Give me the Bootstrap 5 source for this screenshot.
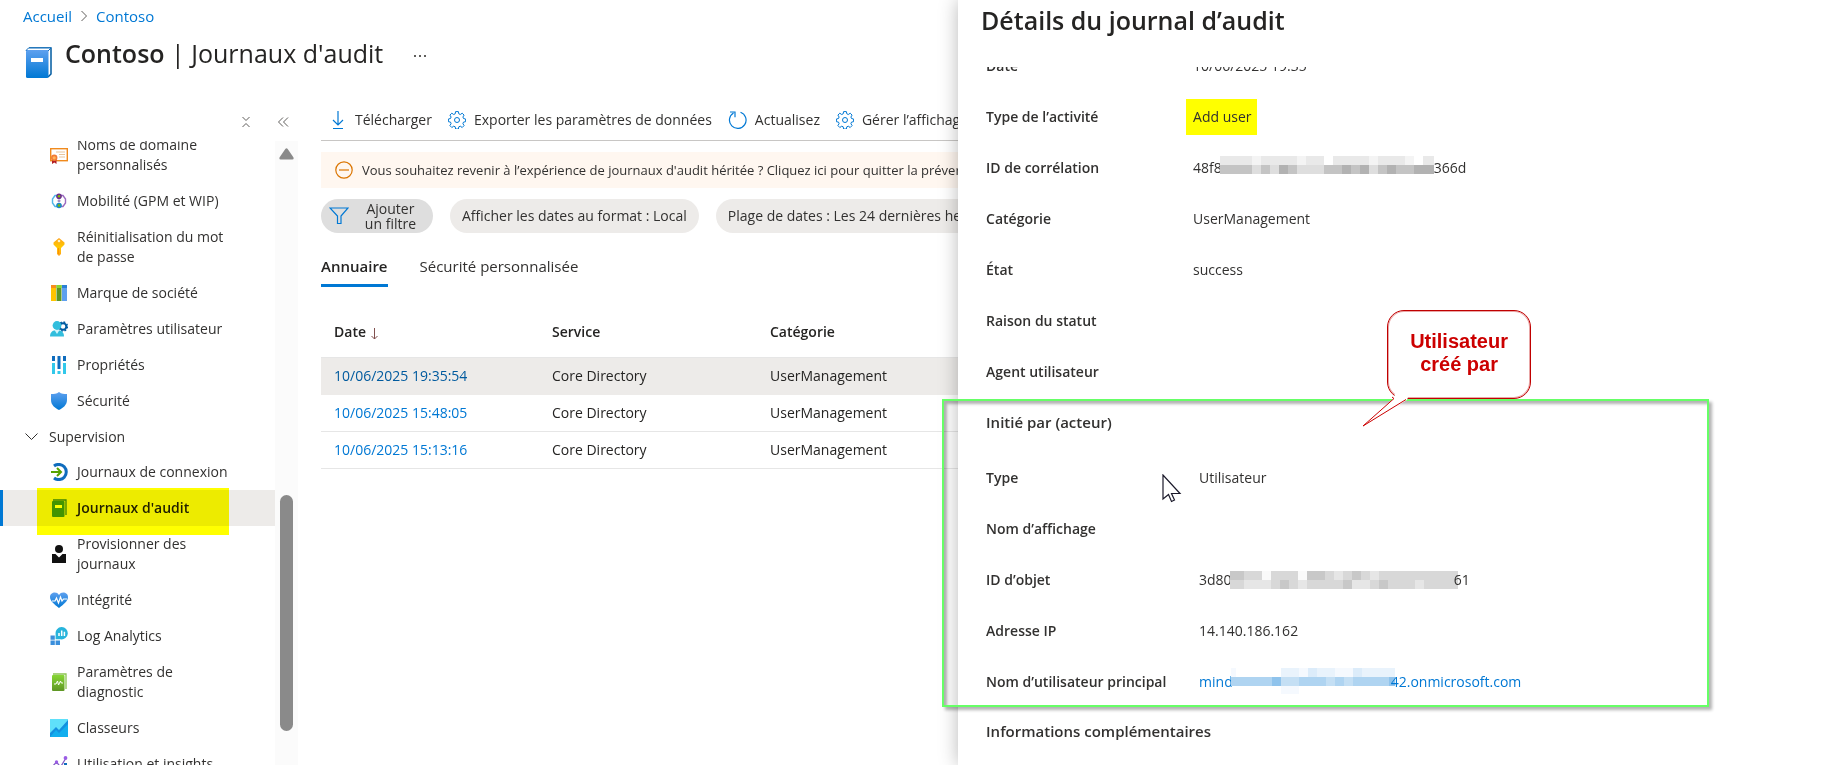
<!DOCTYPE html>
<html lang="fr">
<head>
<meta charset="utf-8">
<meta name="viewport" content="width=device-width, initial-scale=1">
<title>Contoso | Journaux d'audit</title>
<link href="https://cdn.jsdelivr.net/npm/bootstrap@5.3.0/dist/css/bootstrap.min.css" rel="stylesheet">
<style>
  :root { --az-blue: #0078d4; --az-text: #323130; --az-line: #e6e6e6; }
  body { font-family: "Open Sans", "Noto Sans", sans-serif; font-size: 14px; line-height: 20px; color: var(--az-text); background: #fff; }
  a { color: var(--az-blue); text-decoration: none; }
  .shell { display: grid; grid-template-columns: 11fr 10fr; height: 100vh; overflow: hidden; }
  .shell > * { min-width: 0; min-height: 0; }
  .fit { min-height: 0; }
  button { color: inherit; }
  .plain-btn { border: 0; background: none; padding: 0; line-height: 1; }

  .crumbs { height: 32px; padding-left: 23px; gap: 8px; font-size: 15px; }
  .page-head { height: 68px; padding-left: 24px; }
  .page-head h1 { font-size: 25px; line-height: 32px; margin: 5px 0 0 11px; color: #252423; font-weight: 400; }
  .page-head h1 b { font-weight: 600; }
  .page-head .book { margin-top: 14px; }

  .side { width: 298px; }
  .side-tools { height: 41px; padding-right: 7px; gap: 24px; }
  .side-list { width: 275px; overflow: hidden; }
  .side-list ul { margin-top: -14px; }
  .side-link { display: flex; align-items: center; gap: 9px; color: inherit; padding: 8px 40px 8px 50px; }
  .side-link svg { flex: none; width: 18px; height: 18px; }
  .side-group { height: 35px; padding-left: 24px; gap: 10px; border: 0; background: none; }
  .side-link.current { position: relative; background: #edebe9; border-left: 3px solid var(--az-blue); padding-left: 47px; color: #201f1e; font-weight: 600; }
  .marker { position: absolute; left: 34px; right: 46px; top: -2px; bottom: -9px; background: #ff0; mix-blend-mode: multiply; z-index: 1; }
  .rail { width: 23px; background: #fbfbfb; padding-top: 7px; }
  .thumb { width: 13px; height: 236px; border-radius: 7px; background: #8a8a8a; margin-bottom: 34px; }

  .work { padding-left: 23px; white-space: nowrap; min-width: 0; }
  .tools { height: 41px; border-bottom: 1px solid #c8c6c4; padding-left: 8px; gap: 16px; }
  .tools button { display: flex; align-items: center; gap: 8px; line-height: 20px; flex: none; }
  .notice { height: 36px; background: #fff7f0; margin-top: 11px; padding-left: 14px; gap: 9px; font-size: 13px; }
  .pills { margin-top: 11px; gap: 17px; }
  .pill { height: 34px; border: 0; border-radius: 17px; background: #edebe9; padding: 0 12px; flex: none; }
  .pill.add { width: 112px; background: #dedede; line-height: 15px; padding: 0 17px 0 8px; }
  .tabs { margin-top: 15px; gap: 32px; font-size: 15px; }
  .tabs button { height: 39px; border-bottom: 3px solid transparent; }
  .tabs button[aria-selected=true] { border-color: var(--az-blue); font-weight: 600; color: #252423; }
  .logs { margin-top: 21px; width: 100%; table-layout: fixed; }
  .logs th { height: 49px; font-weight: 600; padding: 0 0 0 13px; border-bottom: 1px solid var(--az-line); color: #252423; }
  .logs td { height: 37px; padding: 0 0 0 13px; border-bottom: 1px solid var(--az-line); color: #252423; }
  .logs .fixed-w { width: 218px; }
  .logs .picked td { background: #edebe9; border-color: #edebe9; }
  .logs .picked a { color: #005a9e; }

  .details { position: relative; background: #fff; box-shadow: 0 0 18px rgba(0,0,0,.28); padding-left: 23px; }
  .details h2 { height: 67px; margin: 0; padding-top: 4px; font-size: 25px; line-height: 32px; font-weight: 600; color: #252423; }
  .detail-body { padding-left: 5px; clip-path: inset(0 0 0 -60px); }
  .detail-body dl { margin: 0; }
  .detail-body .detail-first { margin-top: -27px; }
  .line { display: flex; align-items: center; height: 51px; }
  .line dt { width: 207px; font-weight: 600; }
  .line dd { margin: 0; display: flex; align-items: center; }
  .actor { position: relative; }
  .actor dt { width: 213px; }
  .actor h3, .extra h3 { font-size: 15px; line-height: 20px; font-weight: 600; margin: 0; }
  .actor h3 { padding: 15px 0 20px; }
  .frame { position: absolute; left: -44px; top: 2px; right: 120px; height: 308px; border: 2px solid #6f6; box-shadow: 3px 3px 3px rgba(0,0,0,.3), inset 3px 3px 3px rgba(0,0,0,.3); pointer-events: none; }
  .line .hl { background: #ff0; padding: 8px 5px 8px 7px; margin-left: -7px; }
  .mosaic { shape-rendering: crispEdges; flex: none; margin: 0 -4px 0 -2px; }
  .bubble { position: absolute; left: 401px; top: -87px; width: 144px; height: 89px; border: 1px solid #c00000; box-shadow: inset 0 0 0 1px rgba(192,0,0,.35); border-radius: 17px; background: #fff; color: #c00; font: bold 20px/23px "Liberation Sans", Arial, sans-serif; padding-top: 19px; text-align: center; }
  .bubble svg { position: absolute; left: -27px; top: 83px; }
  .pointer { position: absolute; left: 176px; top: 77px; }
  .extra h3 { padding-top: 14px; }
</style>
</head>
<body>
<svg width="0" height="0" class="position-absolute" aria-hidden="true">
  <defs>
    <linearGradient id="gb" x2="0" y2="1"><stop stop-color="#5ea0ef"/><stop offset="1" stop-color="#0078d4"/></linearGradient>
    <linearGradient id="gg" x2="0" y2="1"><stop stop-color="#86d633"/><stop offset="1" stop-color="#5e9624"/></linearGradient>
    <linearGradient id="gy" x2="0" y2="1"><stop stop-color="#fea11b"/><stop offset=".5" stop-color="#ffca00"/><stop offset="1" stop-color="#fea11b"/></linearGradient>
    <symbol id="gear" viewBox="0 0 18 18"><g fill="none" stroke="#0078d4"><circle cx="9" cy="9" r="2.500"/><path d="M7.600 .6h2.800l.4 2.200 1.500.7 1.900-1.300 1.900 1.900-1.200 1.900.6 1.500 2.100.5v2.700l-2.100.4-.6 1.600 1.200 1.800-1.900 2-1.900-1.300-1.500.6-.4 2.200H7.600l-.4-2.200-1.500-.6-1.900 1.300-1.900-2 1.200-1.800-.6-1.600-2.100-.4V8l2.100-.5.6-1.500-1.200-1.900 1.900-1.900 1.900 1.300 1.500-.7z" stroke-linejoin="round"/></g></symbol>
  </defs>
</svg>

<div class="shell">
  <main class="d-flex flex-column overflow-hidden">
    <nav class="crumbs d-flex align-items-center flex-shrink-0" aria-label="Fil d'Ariane">
      <a href="#">Accueil</a>
      <svg width="8" height="12" viewBox="0 0 8 12"><path d="M1.500 1l5 5-5 5" fill="none" stroke="#605e5c"/></svg>
      <a href="#">Contoso</a>
    </nav>
    <header class="page-head d-flex align-items-start flex-shrink-0">
      <svg class="book" width="30" height="34" viewBox="0 0 30 34"><path d="M5 2h22v26l-3 3" fill="#fff" stroke="#005ba1" stroke-width="1.500"/><path d="M2 4.500L4.500 2H27L24 5z" fill="#fff" stroke="#0f6cbd"/><rect x="2" y="4" width="22.500" height="28" rx="1.500" fill="url(#gb)"/><rect x="7" y="12" width="12" height="4" fill="#fff"/></svg>
      <h1><b>Contoso</b> | Journaux d'audit</h1>
      <button class="plain-btn ms-4 mt-3" aria-label="Autres actions"><svg width="24" height="12" viewBox="0 0 24 12" fill="#605e5c"><rect x="7" y="5" width="2" height="2"/><rect x="12" y="5" width="2" height="2"/><rect x="17" y="5" width="2" height="2"/></svg></button>
    </header>
    <div class="d-flex flex-fill fit">
      <aside class="side d-flex flex-column flex-shrink-0">
        <div class="side-tools d-flex align-items-center justify-content-end flex-shrink-0">
          <button class="plain-btn" aria-label="Tout réduire"><svg width="14" height="12" viewBox="0 0 14 12"><path d="M3.500 1l3.500 3.500L10.500 1M3.500 11L7 7.500l3.500 3.500" fill="none" stroke="#605e5c"/></svg></button>
          <button class="plain-btn" aria-label="Masquer le menu"><svg width="14" height="12" viewBox="0 0 14 12"><path d="M6 1.500L1.500 6 6 10.500M11 1.500L6.500 6l4.500 4.500" fill="none" stroke="#605e5c"/></svg></button>
        </div>
        <div class="d-flex flex-fill fit">
          <nav class="side-list" aria-label="Menu du service">
            <ul class="list-unstyled mb-0">
              <li><a class="side-link" href="#"><svg viewBox="0 0 18 18"><rect x=".7" y="2.700" width="16.600" height="12" fill="#fff" stroke="#f08a1d" stroke-width="1.400"/><path d="M6 6h9M9 8.500h6M9 11h6" stroke="#e8c59b"/><path d="M2 13h4.500v5l-2.200-1.500L2 18z" fill="#b31d23"/><circle cx="4.200" cy="11.800" r="3.200" fill="#f27c35"/><circle cx="4.200" cy="11.800" r="1.600" fill="#ffb45c"/></svg><span>Noms de domaine personnalisés</span></a></li>
              <li><a class="side-link" href="#"><svg viewBox="0 0 18 18"><g fill="none" stroke-width="1.400"><path d="M7 3.500H5L2.500 7v4L5 14.500h2" stroke="#50b6e8"/><path d="M11 3.500h2L15.500 7v4L13 14.500h-2" stroke="#9b6bc0"/></g><circle cx="9" cy="4.200" r="2.800" fill="#6b2b8f"/><circle cx="9" cy="4.200" r="1.300" fill="#7fba00"/><circle cx="9" cy="8.800" r="1.500" fill="#a58fc5"/><circle cx="9" cy="13.500" r="2.800" fill="#1b87c9"/><circle cx="9" cy="13.500" r="1.300" fill="#7fba00"/></svg><span>Mobilité (GPM et WIP)</span></a></li>
              <li><a class="side-link" href="#"><svg viewBox="0 0 18 18"><path d="M9 0l5.500 4.500v2L11 10v6l-2 2-2-2v-6L3.500 6.500v-2z" fill="url(#gy)"/><circle cx="9" cy="3" r="1.300" fill="#fff3c4"/><path d="M8.500 10v6" stroke="#ff9300"/></svg><span>Réinitialisation du mot de passe</span></a></li>
              <li><a class="side-link" href="#"><svg viewBox="0 0 18 18"><rect x="1" y="1" width="5" height="16" fill="#ffc400"/><rect x="1" y="1" width="5" height="3" fill="#f78d1e"/><rect x="6.500" y="1" width="5" height="16" fill="#5e9624"/><rect x="6.500" y="1" width="5" height="3" fill="#86d633"/><rect x="12" y="1" width="5" height="16" fill="#5ea0ef"/><rect x="12" y="1" width="5" height="3" fill="#2a7fd4"/></svg><span>Marque de société</span></a></li>
              <li><a class="side-link" href="#"><svg viewBox="0 0 18 18"><circle cx="13" cy="6.500" r="3.300" fill="none" stroke="#005ba1" stroke-width="2"/><circle cx="13" cy="6.500" r="4.500" fill="none" stroke="#005ba1" stroke-width="1.400" stroke-dasharray="1.800 1.730"/><circle cx="7" cy="5.500" r="4.400" fill="#32bedd"/><path d="M0 16.500C0 12 3 10 7 10s7 2 7 6.500z" fill="#32bedd"/><path d="M4.500 10l2.500 4 2.500-4z" fill="#d4f5fb"/></svg><span>Paramètres utilisateur</span></a></li>
              <li><a class="side-link" href="#"><svg viewBox="0 0 18 18"><path d="M2 0h3v5H2zM7.500 0h3v13h-3zM13 0h3v5h-3z" fill="#0f6cbd"/><path d="M2 7h3v11H2zM7.500 15h3v3h-3zM13 7h3v11h-3z" fill="#32c8ea"/></svg><span>Propriétés</span></a></li>
              <li><a class="side-link" href="#"><svg viewBox="0 0 18 18"><path d="M9 0c2.500 2 5 2 8 2v6c0 5-4 8-8 10-4-2-8-5-8-10V2c3 0 5.500 0 8-2z" fill="url(#gb)"/></svg><span>Sécurité</span></a></li>
              <li><button class="side-group d-flex align-items-center w-100" aria-expanded="true"><svg width="15" height="9" viewBox="0 0 15 9"><path d="M1.500 1.500l6 6 6-6" fill="none" stroke="#323130"/></svg>Supervision</button></li>
              <li><a class="side-link" href="#"><svg viewBox="0 0 18 18"><path d="M4 3a7.600 7.600 0 1 1 0 12" fill="none" stroke="#0f6cbd" stroke-width="3"/><path d="M1 9h9M7 5l4 4-4 4" fill="none" stroke="#57a300" stroke-width="2"/></svg><span>Journaux de connexion</span></a></li>
              <li><a class="side-link current" href="#" aria-current="page"><svg viewBox="0 0 18 18"><path d="M3 1h13v15" fill="none" stroke="#3f8500" stroke-width="1.300"/><rect x="2" y="2" width="12.500" height="16" rx="1" fill="#439400"/><rect x="5" y="6" width="7" height="3" fill="#fff"/></svg><span>Journaux d'audit</span><i class="marker"></i></a></li>
              <li><a class="side-link" href="#"><svg viewBox="0 0 18 18" fill="#111"><circle cx="9" cy="4" r="4"/><path d="M2 9h3.500L9 12.500 12.500 9H16v9H2z"/></svg><span>Provisionner des journaux</span></a></li>
              <li><a class="side-link" href="#"><svg viewBox="0 0 18 18"><path d="M9 17C4 13 0 10 0 6c0-5 7-6 9-2 2-4 9-3 9 2 0 4-4 7-9 11z" fill="url(#gb)"/><path d="M2 10h3l1.500-3 2 5L10.500 6l1.500 4 1.500-2H17" fill="none" stroke="#fff" stroke-width="1.200"/></svg><span>Intégrité</span></a></li>
              <li><a class="side-link" href="#"><svg viewBox="0 0 18 18"><path d="M.5 8.500h4.300v4.300H.5zM.5 13.500h4.300V18H.5zM5.600 13.500H10V18H5.600z" fill="#3a8fdc"/><path d="M11.500 0a6.200 6.200 0 1 1-1 12.300H5.600V7A6.200 6.200 0 0 1 11.500 0z" fill="#27b4dc"/><path d="M9 9V6M11.700 9V3.500M14.400 9V4.800" stroke="#fff" stroke-width="1.500"/></svg><span>Log Analytics</span></a></li>
              <li><a class="side-link" href="#"><svg viewBox="0 0 18 18"><path d="M3 1h13v15" fill="none" stroke="#8cc451" stroke-width="1.300"/><rect x="2" y="2" width="12.500" height="16" rx="1" fill="url(#gg)"/><path d="M4 11h2l1.500-3 1 4 2-4 .8 2H13" fill="none" stroke="#fff"/></svg><span>Paramètres de diagnostic</span></a></li>
              <li><a class="side-link" href="#"><svg viewBox="0 0 18 18"><path d="M0 0h18v18H0z" fill="#5fe0fa"/><path d="M0 14l6-6 3 3 9-10v17H0z" fill="#1490df"/><path d="M0 18l6-7 3 3 9-9v13z" fill="#12aeee"/></svg><span>Classeurs</span></a></li>
              <li><a class="side-link text-nowrap" href="#"><svg viewBox="0 0 18 18"><path d="M2 12l4.500-5 4 5L16 3" fill="none" stroke="#8661c5" stroke-width="1.300"/><g fill="#9b5de5"><circle cx="2" cy="12" r="1.700"/><circle cx="6.500" cy="7" r="1.700"/><circle cx="10.500" cy="12" r="1.700"/><circle cx="15.500" cy="3" r="1.900"/></g><path d="M14 8h3v10h-3zM1 15h3v3H1z" fill="#0f6cbd"/></svg><span>Utilisation et insights</span></a></li>
            </ul>
          </nav>
          <div class="rail d-flex flex-column align-items-center justify-content-between">
            <svg width="15" height="12" viewBox="0 0 15 12"><path d="M6.300 1Q7.500-.4 8.700 1l5.800 8.600Q15 11.500 13.400 11.500H1.600Q0 11.500.5 9.600z" fill="#8a8a8a"/></svg>
            <div class="thumb"></div>
          </div>
        </div>
      </aside>
      <section class="work flex-fill">
        <div class="tools d-flex align-items-center" role="toolbar">
          <button class="plain-btn"><svg width="18" height="20" viewBox="0 0 18 20"><path d="M9 1v14M4 10l5 5 5-5M4 18.500h10" fill="none" stroke="#0078d4" stroke-width="1.200"/></svg>Télécharger</button>
          <button class="plain-btn"><svg width="18" height="18"><use href="#gear"/></svg>Exporter les paramètres de données</button>
          <button class="plain-btn"><svg width="19" height="20" viewBox="0 0 19 20"><path d="M12.500 2.300A8.300 8.300 0 1 1 5.500 3M2 2h5v5.300" fill="none" stroke="#0078d4" stroke-width="1.200"/></svg>Actualisez</button>
          <button class="plain-btn"><svg width="18" height="18"><use href="#gear"/></svg>Gérer l’affichage</button>
        </div>
        <div class="notice d-flex align-items-center overflow-hidden">
          <svg class="flex-shrink-0" width="18" height="18" viewBox="0 0 18 18"><g fill="none" stroke="#db7500" stroke-width="1.200"><circle cx="9" cy="9" r="8.200"/><path d="M4 9h10"/></g></svg>
          <span>Vous souhaitez revenir à l’expérience de journaux d'audit héritée ? Cliquez ici pour quitter la préversion.</span>
        </div>
        <div class="pills d-flex">
          <button class="pill add d-flex align-items-center justify-content-between"><svg width="20" height="18" viewBox="0 0 20 18"><path d="M1 1h18l-7 8v7.500H8.500V9z" fill="none" stroke="#0078d4" stroke-width="1.200"/></svg><span>Ajouter<br>un filtre</span></button>
          <button class="pill">Afficher les dates au format : Local</button>
          <button class="pill">Plage de dates : Les 24 dernières heures</button>
        </div>
        <div class="tabs d-flex" role="tablist">
          <button class="plain-btn" role="tab" aria-selected="true">Annuaire</button>
          <button class="plain-btn" role="tab" aria-selected="false">Sécurité personnalisée</button>
        </div>
        <table class="logs">
          <colgroup><col class="fixed-w"><col class="fixed-w"><col></colgroup>
          <thead><tr><th>Date <svg width="9" height="12" viewBox="0 0 9 12"><path d="M4.500 0v11M1.500 8l3 3 3-3" fill="none" stroke="#80504e"/></svg></th><th>Service</th><th>Catégorie</th></tr></thead>
          <tbody>
            <tr class="picked"><td><a href="#">10/06/2025 19:35:54</a></td><td>Core Directory</td><td>UserManagement</td></tr>
            <tr><td><a href="#">10/06/2025 15:48:05</a></td><td>Core Directory</td><td>UserManagement</td></tr>
            <tr><td><a href="#">10/06/2025 15:13:16</a></td><td>Core Directory</td><td>UserManagement</td></tr>
          </tbody>
        </table>
      </section>
    </div>
  </main>

  <aside class="details d-flex flex-column" aria-label="Détails">
    <h2 class="flex-shrink-0">Détails du journal d’audit</h2>
    <div class="detail-body flex-fill fit">
      <dl class="detail-first">
        <div class="line"><dt>Date</dt><dd>10/06/2025 19:35</dd></div>
        <div class="line"><dt>Type de l’activité</dt><dd class="hl">Add user</dd></div>
        <div class="line"><dt>ID de corrélation</dt><dd>48f8<svg class="mosaic me-0" width="214" height="24" viewBox="0 0 214 24"><path fill="#e9e9e9" d="M0 0h216v9H0z"/><path fill="#f4f4f4" d="M32 0h9v9h-9zM77 0h9v9h-9zM149 0h9v9h-9zM185 0h9v9h-9z"/><path fill="#fff" d="M104 0h9v9h-9zM194 0h9v9h-9z"/><path fill="#c4c4c4" d="M0 9h216v9H0z"/><path fill="#dedede" d="M32 9h9v9h-9zM50 9h9v9h-9zM77 9h27v9H77zM149 9h9v9h-9z"/><path fill="#b2b2b2" d="M59 9h9v9h-9zM122 9h9v9h-9zM140 9h9v9h-9zM167 9h9v9h-9zM194 9h22v9h-22z"/></svg>366d</dd></div>
        <div class="line"><dt>Catégorie</dt><dd>UserManagement</dd></div>
        <div class="line"><dt>État</dt><dd>success</dd></div>
        <div class="line"><dt>Raison du statut</dt><dd></dd></div>
        <div class="line"><dt>Agent utilisateur</dt><dd></dd></div>
      </dl>
      <section class="actor">
        <div class="frame"></div>
        <h3>Initié par (acteur)</h3>
        <dl>
          <div class="line"><dt>Type</dt><dd>Utilisateur</dd></div>
          <div class="line"><dt>Nom d’affichage</dt><dd></dd></div>
          <div class="line"><dt>ID d’objet</dt><dd>3d80<svg class="mosaic" width="228" height="18" viewBox="0 0 228 18"><path fill="#d8d8d8" d="M0 0h228v18H0z"/><path fill="#e6e6e6" d="M14 9h27v9H14zM68 9h9v9h-9zM104 0h9v9h-9zM122 9h9v9h-9zM131 9h9v9h-9zM140 0h9v9h-9zM185 9h9v9h-9z"/><path fill="#fafafa" d="M32 0h9v9h-9zM68 0h9v9h-9z"/><path fill="#c8c8c8" d="M0 0h14v9H0zM77 0h18v9H77zM50 9h9v9h-9zM113 9h9v9h-9zM122 0h9v9h-9zM149 9h9v9h-9z"/></svg>61</dd></div>
          <div class="line"><dt>Adresse IP</dt><dd>14.140.186.162</dd></div>
          <div class="line"><dt>Nom d’utilisateur principal</dt><dd><a class="d-flex align-items-center" href="#">mind<svg class="mosaic" width="164" height="27" viewBox="0 0 164 27"><path fill="#f5f9fe" d="M0 0h5v9H0zM50 18h18v8H50z"/><path fill="#e9f3fc" d="M50 0h114v9H50z"/><path fill="#dcecfa" d="M77 0h9v9h-9zM122 0h9v9h-9z"/><path fill="#f5f9fe" d="M68 0h9v9h-9zM104 0h18v9h-18z"/><path fill="#afd4f1" d="M0 9h164v9H0z"/><path fill="#8fc3ec" d="M41 9h9v9h-9zM158 9h6v9h-6z"/><path fill="#c4dff4" d="M50 9h18v9H50zM95 9h9v9h-9zM113 9h9v9h-9z"/></svg>42.onmicrosoft.com</a></dd></div>
        </dl>
        <svg class="pointer" width="20" height="30" viewBox="0 0 20 30"><path d="M1 1v24l5.500-4.500 3 7 3-1.500-3-6.500H18z" fill="#fff" stroke="#1b1a2b" stroke-width="1.200"/></svg>
        <div class="bubble">Utilisateur<br>créé par
          <svg width="52" height="36" viewBox="0 0 52 36"><path d="M34 0L33 4 2 32 46 6l2-6z" fill="#fff"/><path d="M31 3l2 1.500L2 32 45 5.500" fill="none" stroke="#c00" stroke-width="1"/></svg>
        </div>
      </section>
      <section class="extra"><h3>Informations complémentaires</h3></section>
    </div>
  </aside>
</div>
<script src="https://cdn.jsdelivr.net/npm/bootstrap@5.3.0/dist/js/bootstrap.bundle.min.js"></script>
</body>
</html>
